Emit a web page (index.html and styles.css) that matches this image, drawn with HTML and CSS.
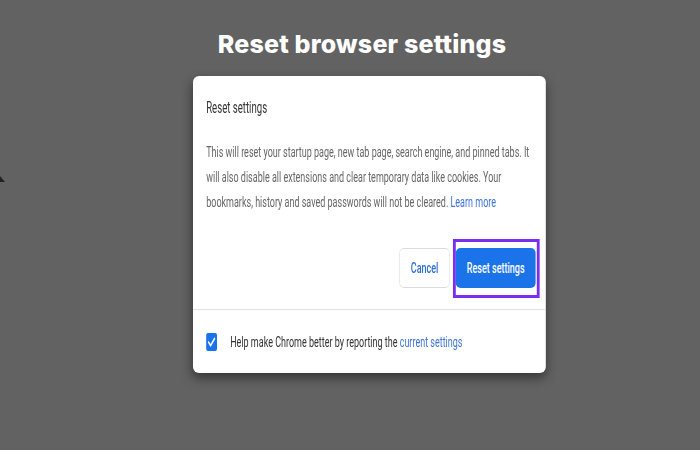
FILE: index.html
```html
<!DOCTYPE html>
<html lang="en">
<head>
<meta charset="utf-8">
<title>Reset browser settings</title>
<link rel="stylesheet" href="styles.css">
</head>
<body>
<main class="page">
  <h1 class="page-title">Reset browser settings</h1>
  <div class="dialog-slot">
    <section class="dialog">
      <h2 class="dialog-title">Reset settings</h2>
      <p class="dialog-body">This will reset your startup page, new tab page, search engine, and pinned tabs. It will also disable all extensions and clear temporary data like cookies. Your bookmarks, history and saved passwords will not be cleared. <a class="link" href="#">Learn more</a></p>
      <div class="actions">
        <button class="btn btn-cancel">Cancel</button>
        <div class="highlight-wrap">
          <button class="btn btn-primary">Reset settings</button>
          <span class="highlight"></span>
        </div>
      </div>
      <div class="footer">
        <span class="checkbox">
          <svg viewBox="0 0 18 18" width="18" height="18"><path d="M4 9.2 L7.4 12.6 L14 5.6" fill="none" stroke="#fff" stroke-width="2.2" stroke-linecap="round" stroke-linejoin="round"/></svg>
        </span>
        <span class="footer-text">Help make Chrome better by reporting the <a class="link" href="#">current settings</a></span>
      </div>
    </section>
  </div>
  <svg class="cursor" viewBox="0 0 6 8" width="6" height="8"><path d="M0 0 L5 6 L0 6 Z" fill="#222"/></svg>
</main>
</body>
</html>
```
FILE: styles.css
```css
html, body {
  margin: 0;
  padding: 0;
  overflow: hidden;
}
body {
  background: #626262;
  width: 700px;
  height: 450px;
}
.page {
  position: relative;
  width: 700px;
  height: 450px;
  padding-top: 29px;
  box-sizing: border-box;
}
.page-title {
  margin: 0;
  padding-left: 24px;
  text-align: center;
  font-family: Inter, "Open Sans", sans-serif;
  font-weight: 800;
  font-size: 25px;
  line-height: 30px;
  letter-spacing: 0.2px;
  color: #ffffff;
}
.dialog-slot {
  margin-top: 17px;
  padding-left: 193px;
  height: 297px;
}
.dialog {
  width: 588px;
  height: 297px;
  box-sizing: border-box;
  background: #ffffff;
  border-radius: 10px / 6px;
  box-shadow: 0 5px 14px rgba(0, 0, 0, 0.45);
  transform: scaleX(0.6);
  transform-origin: left top;
  font-family: Roboto, "Liberation Sans", sans-serif;
  display: flex;
  flex-direction: column;
}
.dialog-title {
  margin: 0;
  padding: 22px 22px 0;
  font-size: 16px;
  line-height: 20px;
  font-weight: 400;
  color: #333333;
}
.dialog-body {
  margin: 22px 0 0;
  padding: 0 22px;
  font-size: 15px;
  line-height: 25px;
  color: #666666;
}
.link {
  color: #3d73d9;
  text-decoration: none;
}
.actions {
  display: flex;
  justify-content: flex-end;
  gap: 10px;
  margin-top: 33px;
  padding-right: 17px;
}
.btn {
  height: 40px;
  border-radius: 8px / 5px;
  font-family: Roboto, "Liberation Sans", sans-serif;
  font-size: 15px;
  font-weight: 500;
  padding: 0;
  cursor: pointer;
}
.btn-cancel {
  width: 84px;
  background: #ffffff;
  border: 1px solid #dcdcdc;
  color: #2f6fd6;
}
.btn-primary {
  display: block;
  width: 133px;
  background: #1a73e8;
  border: none;
  color: #ffffff;
}
.highlight-wrap {
  position: relative;
}
.highlight {
  position: absolute;
  left: -5px;
  right: -7px;
  top: -9px;
  bottom: -10px;
  border-style: solid;
  border-color: #7a2ff0;
  border-width: 3px 5px;
  pointer-events: none;
}
.footer {
  margin-top: 21px;
  border-top: 1px solid #e3e3e3;
  padding: 23px 22px 0;
  display: flex;
  align-items: center;
  gap: 22px;
}
.checkbox {
  width: 18px;
  height: 18px;
  border-radius: 3px / 2px;
  background: #1a73e8;
  display: flex;
}
.footer-text {
  font-size: 15px;
  line-height: 18px;
  color: #333333;
}
.cursor {
  position: absolute;
  left: 0;
  top: 176px;
}
```
